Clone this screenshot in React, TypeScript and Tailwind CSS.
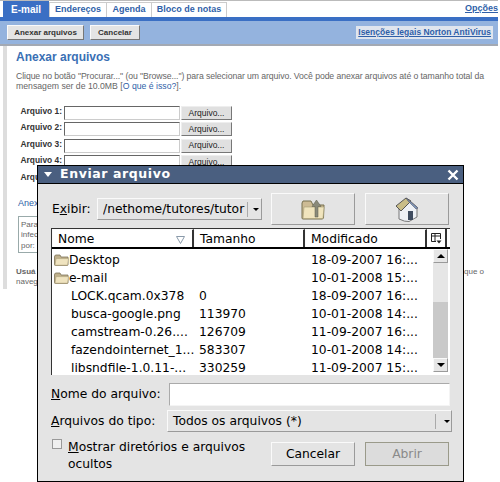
import React from "react";

const Row = ({ n }: { n: number }) => (
  <div className="flex h-[16.4px] items-start">
    <span className="mr-[2px] w-[42px] text-right text-[8.4px] font-bold leading-[12px] text-[#333] whitespace-nowrap">Arquivo {n}:</span>
    <div className="mt-[1px] h-[14px] w-[116px] shrink-0 border border-[#ccc] border-t-[#666] border-l-[#666] bg-white" />
    <div className="ml-[1px] mt-[1px] flex h-[14px] w-[51px] shrink-0 items-center justify-center border border-[#eee] border-r-[#777] border-b-[#777] bg-[#e0e0e0] text-[8.5px] text-[#222]">Arquivo...</div>
  </div>
);

const FolderIcon = () => (
  <svg width="15" height="12" viewBox="0 0 15 12" className="shrink-0">
    <path d="M0.5 3 L0.5 10.5 Q0.5 11.5 1.5 11.5 L13 11.5 Q14 11.5 14 10.5 L14 3 L7 3 L6 1 L2 1 Q0.5 1 0.5 3Z" fill="#bfb08c" stroke="#7d7358" strokeWidth="0.8" />
    <path d="M1 11.2 L2 4.6 L14.5 4.6 L13.6 11.2 Z" fill="#efe3bf" stroke="#a3956f" strokeWidth="0.5" />
  </svg>
);

const files: [string, string, string, boolean][] = [
  ["Desktop", "", "18-09-2007 16:...", true],
  ["e-mail", "", "10-01-2008 15:...", true],
  ["LOCK.qcam.0x378", "0", "18-09-2007 16:...", false],
  ["busca-google.png", "113970", "10-01-2008 14:...", false],
  ["camstream-0.26....", "126709", "11-09-2007 16:...", false],
  ["fazendointernet_1...", "583307", "10-01-2008 14:...", false],
  ["libsndfile-1.0.11-...", "330259", "11-09-2007 15:...", false],
];

const raised = "border border-[#fafafa] border-r-[#9a9a9a] border-b-[#9a9a9a]";

export default function App() {
  return (
    <div className="relative h-[482px] w-[500px] overflow-hidden bg-white font-['Liberation_Sans',sans-serif]">
      <div className="h-[1px] w-[498px] bg-[#bbb]" />
      <div className="flex h-[16px] w-[498px] items-end pl-[3px] text-[9px] font-bold">
        <div className="flex h-[16px] w-[46px] items-center justify-center bg-[#3a6fc4] text-[10px] text-white">E-mail</div>
        <div className="flex h-[15px] w-[58px] items-center justify-center border border-b-0 border-[#ccc] text-[#2f5fa8]">Endereços</div>
        <div className="flex h-[15px] w-[45px] items-center justify-center border border-b-0 border-l-0 border-[#ccc] text-[#2f5fa8]">Agenda</div>
        <div className="flex h-[15px] w-[75px] items-center justify-center border border-b-0 border-l-0 border-[#ccc] text-[#2f5fa8]">Bloco de notas</div>
        <div className="ml-auto pb-[2px] text-[9px] text-[#2f5fa8] underline">Opções</div>
      </div>
      <div className="h-[4px] w-[498px] bg-[#3a6fc4]" />
      <div className="flex h-[25px] w-[498px] items-center justify-between border-b-[2px] border-[#a3a9b3] bg-[#94b3de] pl-[7px] pr-[5px]">
        <div className="flex gap-[6px]">
          <div className={`flex h-[15px] w-[77px] items-center justify-center bg-[#e4e4e4] text-[8px] font-bold text-[#333] ${raised} border-r-[#777] border-b-[#777]`}>Anexar arquivos</div>
          <div className={`flex h-[15px] w-[50px] items-center justify-center bg-[#e4e4e4] text-[8px] font-bold text-[#333] ${raised} border-r-[#777] border-b-[#777]`}>Cancelar</div>
        </div>
        <div className="bg-[#dfe5ee] px-[2px] py-[1px] text-[8.5px] font-bold leading-[11px] text-[#2f5fa8] underline">Isenções legais Norton AntiVirus</div>
      </div>
      <div className="ml-[3px] h-[243px] w-[494px] border-l-[4px] border-[#ddd] pl-[9px]">
        <div className="pt-[2px] text-[12px] font-bold leading-[18px] text-[#3a6fb4]">Anexar arquivos</div>
        <div className="mt-[5px] text-[8.7px] leading-[10px] text-[#666]">
          <div className="whitespace-nowrap tracking-[-0.085px]">Clique no botão "Procurar..." (ou "Browse...") para selecionar um arquivo. Você pode anexar arquivos até o tamanho total da</div>
          <div className="whitespace-nowrap">mensagem ser de 10.0MB [<span className="text-[#2f5fa8]">O que é isso?</span>].</div>
        </div>
        <div className="mt-[14px] pl-[4px]">
          <Row n={1} />
          <Row n={2} />
          <Row n={3} />
          <Row n={4} />
          <Row n={5} />
        </div>
        <div className="ml-[2px] mt-[10px] text-[9px] leading-[12px] text-[#2f5fa8]">Anexar</div>
        <div className="ml-[2px] mt-[7px] h-[37px] w-[70px] border border-[#9aa] px-[2px] pt-[3px] text-[8px] leading-[10.5px] text-[#666]">
          <div>Para</div><div>infec</div><div>por:</div>
        </div>
        <div className="mt-[14px] flex text-[8px] leading-[10.5px] text-[#666]">
          <div className="w-[40px]"><b>Usuá</b><br />naveg</div>
          <div className="ml-[408px] whitespace-nowrap">que o</div>
        </div>
      </div>

      {/* dialog */}
      <div className="absolute left-[37px] top-[165px] flex h-[317px] w-[427px] flex-col border border-black bg-[#e4e4e4] font-['DejaVu_Sans',sans-serif] text-[12.3px] text-black">
        <div className="flex h-[18px] shrink-0 items-center border-b border-black bg-[#4a5f80] pl-[6px] pr-[4px] text-white">
          <div className="h-0 w-0 border-x-[4.5px] border-t-[5px] border-x-transparent border-t-white" />
          <span className="ml-[8px] text-[12.5px] font-bold tracking-[0.6px]">Enviar arquivo</span>
          <svg width="12" height="12" viewBox="0 0 12 12" className="ml-auto"><path d="M1.5 1.5 L10.5 10.5 M10.5 1.5 L1.5 10.5" stroke="white" strokeWidth="2.4" /></svg>
        </div>
        <div className="mt-[9px] flex h-[32px] shrink-0 pl-[14px] pr-[14px]">
          <span className="w-[45px] pt-[7px]">E<u>x</u>ibir:</span>
          <div className={`mt-[5px] flex h-[22px] w-[165px] items-center ${raised} pl-[5px]`}>
            <span className="w-[144px] overflow-hidden whitespace-nowrap">/nethome/tutores/tutor</span>
            <div className="h-[15px] w-[1px] bg-[#aaa]" />
            <div className="ml-[5px]"><div className="h-0 w-0 border-x-[3px] border-t-[3px] border-x-transparent border-t-black" /></div>
          </div>
          <div className={`ml-[9px] flex h-[32px] w-[84px] items-center justify-center ${raised}`}>
            <svg width="24" height="22" viewBox="0 0 24 22">
              <path d="M1 5 L1 20 Q1 21 2 21 L21 21 Q22 21 22.5 20 L23 7 L12 7 L10 3 L2 3 Z" fill="#cdbb94" stroke="#77704f" />
              <path d="M2 20.5 L3 9 L23 9 L22 20.5 Z" fill="#f0e4bd" stroke="#a39a74" strokeWidth="0.6" />
              <path d="M14 19 L14 8.5 L11 8.5 L15.5 2 L20 8.5 L17 8.5 L17 19 Z" fill="#8a8a7a" stroke="#5a5a4a" strokeWidth="0.5" />
            </svg>
          </div>
          <div className={`ml-[10px] flex h-[32px] w-[84px] items-center justify-center ${raised}`}>
            <svg width="24" height="25" viewBox="0 0 24 25">
              <path d="M4 11 L4 22 Q10 25 14 24.5 L22 20 L22 10 L14 3 Z" fill="#eef1f6" stroke="#777" />
              <path d="M1 9 L11 1 L16 4 L6 14 Z" fill="#c9bd88" stroke="#555" />
              <path d="M11 1 L23 11 L21 12 L13 4 Z" fill="#7f99bd" stroke="#556" strokeWidth="0.6" />
              <rect x="13" y="14" width="5" height="9" fill="#3f4c60" />
            </svg>
          </div>
        </div>
        <div className="mx-[13px] mt-[3px] h-[147px] shrink-0 overflow-hidden border-l border-t border-[#333] bg-white">
          <div className="flex h-[20px] border-b-[2px] border-black text-[12.3px] leading-[19px]">
            <div className={`relative w-[142px] border-r-2 border-r-[#333] ${raised} border-b-0 pl-[5px]`}>
              Nome
              <svg width="9" height="8" viewBox="0 0 9 8" className="absolute right-[7px] top-[6px]"><path d="M0.5 0.5 L8.5 0.5 L4.5 7.5 Z" fill="none" stroke="#8a9aaa" /></svg>
            </div>
            <div className={`w-[111px] border-r-2 border-r-[#333] ${raised} border-b-0 pl-[5px]`}>Tamanho</div>
            <div className={`w-[122px] border-r-2 border-r-[#333] ${raised} border-b-0 pl-[5px]`}>Modificado</div>
            <div className="flex w-[20px] items-center justify-center border-r-2 border-[#333]">
              <svg width="11" height="11" viewBox="0 0 11 11"><path d="M0.5 0.5 H9.5 V6 M0.5 0.5 V8.5 H5 M0.5 3 H9.5 M4 0.5 V8.5" fill="none" stroke="#222" /><path d="M5.5 7.5 H10.5 L8 10.5 Z" fill="#222" /></svg>
            </div>
          </div>
          <div className="flex h-[125px]">
            <div className="w-[381px] pt-[2px]">
              {files.map(([n, s, d, f]) => (
                <div key={n} className="flex h-[18px] items-center leading-[18px]">
                  <div className="flex w-[147px] items-center pl-[2px]">
                    {f ? <FolderIcon /> : <span className="w-[15px]" />}
                    <span className={`whitespace-nowrap ${f ? "" : "ml-[2px]"}`}>{n}</span>
                  </div>
                  <span className="w-[112px]">{s}</span>
                  <span className="whitespace-nowrap">{d}</span>
                </div>
              ))}
            </div>
            <div className="flex h-[123px] w-[15px] flex-col bg-[#e6e6e6]">
              <div className={`flex h-[14px] shrink-0 items-center justify-center ${raised}`}><div className="h-0 w-0 border-x-[4px] border-b-[4px] border-x-transparent border-b-black" /></div>
              <div className="h-[39px] shrink-0" />
              <div className="flex-1 bg-[#c9c9c9]" />
              <div className={`flex h-[14px] shrink-0 items-center justify-center ${raised}`}><div className="h-0 w-0 border-x-[4px] border-t-[4px] border-x-transparent border-t-black" /></div>
            </div>
          </div>
        </div>
        <div className="ml-[13px] mt-[8px] flex h-[23px] shrink-0 items-center">
          <span className="w-[118px] shrink-0"><u>N</u>ome do arquivo:</span>
          <div className="h-[23px] w-[281px] shrink-0 border border-[#aaa] border-b-[#f4f4f4] border-r-[#f4f4f4] bg-white" />
        </div>
        <div className="ml-[13px] mt-[4px] flex h-[22px] shrink-0 items-center">
          <span className="w-[116px] shrink-0"><u>A</u>rquivos do tipo:</span>
          <div className={`flex h-[22px] w-[285px] shrink-0 items-center ${raised} pl-[5px]`}>
            <span className="w-[262px]">Todos os arquivos (*)</span>
            <div className="h-[15px] w-[1px] bg-[#aaa]" />
            <div className="ml-[8px]"><div className="h-0 w-0 border-x-[3px] border-t-[3px] border-x-transparent border-t-black" /></div>
          </div>
        </div>
        <div className="ml-[14px] mt-[7px] flex">
          <div className="h-[10px] w-[10px] shrink-0 border border-[#999] bg-[#efefef]" />
          <span className="ml-[6px] w-[195px] shrink-0 leading-[17px]"><u>M</u>ostrar diretórios e arquivos ocultos</span>
          <div className={`ml-[8px] mt-[3px] flex h-[24px] w-[84px] shrink-0 items-center justify-center ${raised}`}>Cancelar</div>
          <div className="ml-[10px] mt-[3px] flex h-[24px] w-[84px] shrink-0 items-center justify-center border border-[#9a9a8a] bg-[#dcdcdc] text-[#8a8a8a]">Abrir</div>
        </div>
      </div>
    </div>
  );
}
